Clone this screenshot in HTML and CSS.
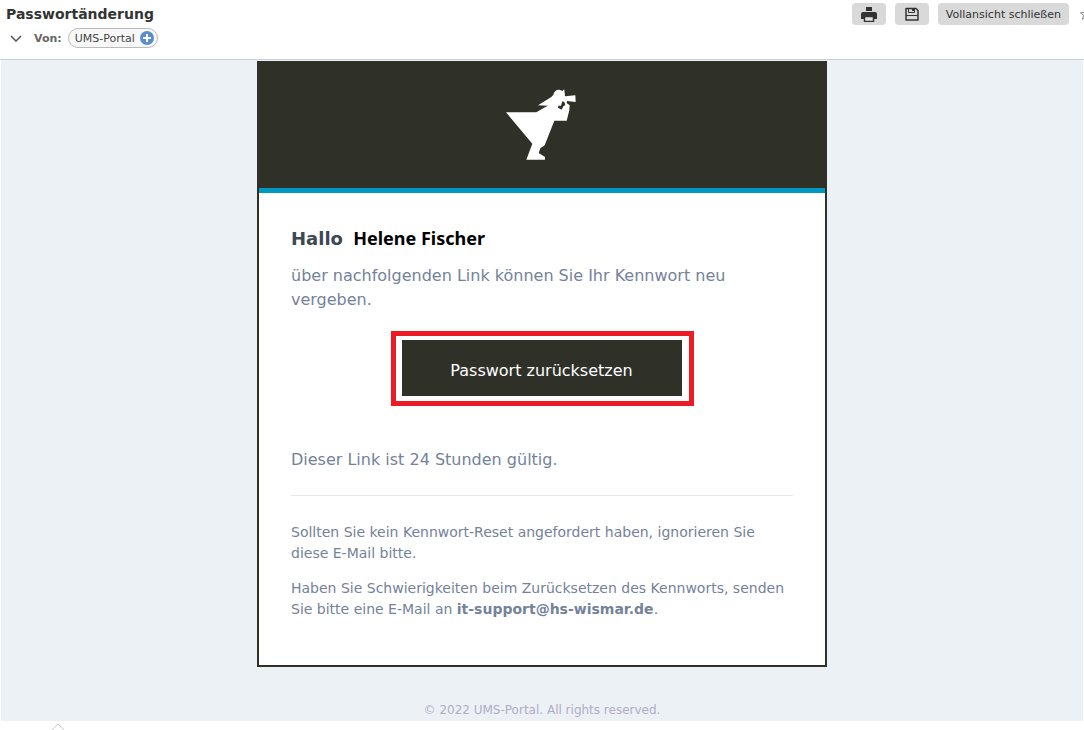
FILE: index.html
```
<!DOCTYPE html>
<html lang="de">
<head>
    <meta charset="UTF-8">
    <meta name="viewport" content="width=device-width, initial-scale=1.0">
    <title>Passwortänderung</title>
    <link rel="stylesheet" href="styles.css">
</head>
<body>
    <header class="mail-header">
        <div class="mail-info">
            <h1 class="subject">Passwortänderung</h1>
            <div class="sender">
                <button class="toggle" aria-label="Details anzeigen">
                    <svg width="12" height="7" viewBox="0 0 12 7" fill="none" stroke="#555" stroke-width="1.5"><path d="M1 1l5 5 5-5"/></svg>
                </button>
                <span class="from">Von:</span>
                <button class="contact">
                    UMS-Portal
                    <svg width="14" height="14" viewBox="0 0 14 14"><circle cx="7" cy="7" r="7" fill="#5b8cd0"/><path d="M7 3v8M3 7h8" stroke="#fff" stroke-width="2"/></svg>
                </button>
            </div>
        </div>
        <div class="actions">
            <button class="action icon" aria-label="Drucken">
                <svg width="16" height="16" viewBox="0 0 16 16"><path fill="#333" d="M5 1h6v4H5zM2 6h12q2 0 2 2v5H0V8q0-2 2-2z"/><path fill="#e4e4e4" stroke="#333" stroke-width="1.500" d="M3.500 10.500h9v5h-9z"/></svg>
            </button>
            <button class="action icon" aria-label="Speichern">
                <svg width="16" height="16" viewBox="0 0 16 16"><path fill="none" stroke="#333" stroke-width="1.500" stroke-linejoin="round" d="M2 2.500h10l2 2v9.500H2z"/><path fill="none" stroke="#333" d="M4.500 3v3.500h6V3M2 9.500h12"/><path fill="#333" d="M8 3h2v2H8z"/></svg>
            </button>
            <button class="action">Vollansicht schließen</button>
            <button class="star" aria-label="Markieren">
                <svg width="12" height="12" viewBox="0 0 12 12" fill="none" stroke="#888"><path d="M6 1l1.500 3.500 4 .3-3 2.500 1 4L6 9l-3.500 2.300 1-4-3-2.500 4-.3z"/></svg>
            </button>
        </div>
    </header>

    <main class="mail-body">
        <article class="card">
            <div class="card-header">
                <svg class="logo" viewBox="48 42 216 216" role="img" aria-label="Hochschule Wismar">
                    <path fill="#fff" d="M48 112H139L165 97 174 92 144 91 184 66 190 59C192 49 200 43 208 44L218 48 220 44H223L225 64 256 61 257 81 231 78 230 84 239 91 238 106 230 137H193L164 211 151 220 146 234 165 246V254H109L127 206Z"/>
                    <path fill="#2f3129" d="M217 79L223 81 226 90 220 94 215 104 204 98 205 92 213 92Z"/>
                </svg>
            </div>
            <div class="content">
                <h2 class="greeting">Hallo <span class="name">Helene Fischer</span></h2>
                <p>über nachfolgenden Link können Sie Ihr Kennwort neu vergeben.</p>
                <div class="highlight">
                    <a class="reset" href="#">Passwort zurücksetzen</a>
                </div>
                <p>Dieser Link ist 24 Stunden gültig.</p>
                <hr class="divider">
                <p class="note">Sollten Sie kein Kennwort-Reset angefordert haben, ignorieren Sie diese E-Mail bitte.</p>
                <p class="note">Haben Sie Schwierigkeiten beim Zurücksetzen des Kennworts, senden Sie bitte eine E-Mail an <a class="support" href="mailto:it-support@hs-wismar.de">it-support@hs-wismar.de</a>.</p>
            </div>
        </article>
        <footer class="footer">© 2022 UMS-Portal. All rights reserved.</footer>
    </main>

    <div class="collapse">
        <svg width="16" height="9" viewBox="0 0 16 9" fill="none" stroke="#ccc"><path d="M1 8l7-7 7 7"/></svg>
    </div>
</body>
</html>
```
FILE: styles.css
```
* {
    box-sizing: border-box;
}
body {
    margin: 0;
    background: #fff;
    font-family: Verdana, "DejaVu Sans", sans-serif;
    overflow: hidden;
}
button {
    font-family: inherit;
    border: none;
    background: none;
    padding: 0;
    cursor: pointer;
}
svg {
    display: block;
}
.mail-header {
    display: flex;
    justify-content: space-between;
    height: 60px;
    padding: 3px 0 0 6px;
    border-bottom: 1px solid #c3cfd9;
}
.subject {
    margin: 0;
    font-size: 14px;
    line-height: 22px;
    color: #333;
}
.sender {
    display: flex;
    align-items: center;
    gap: 12px;
    padding-left: 4px;
    margin-top: 3px;
}
.from {
    font-size: 11px;
    font-weight: bold;
    color: #666;
}
.contact {
    display: flex;
    align-items: center;
    gap: 5px;
    height: 20px;
    margin-left: -6px;
    padding: 0 3px 0 6px;
    border: 1px solid #bbb;
    border-radius: 10px;
    background: #f8f8f8;
    font-size: 11px;
    color: #444;
}
.actions {
    display: flex;
    flex-shrink: 0;
    gap: 9px;
    height: 22px;
    margin-right: -8px;
}
.action {
    display: flex;
    align-items: center;
    justify-content: center;
    padding: 0 8px;
    border-radius: 4px;
    background: #d9d9d9;
    font-size: 11px;
    color: #333;
}
.action.icon {
    width: 34px;
    padding: 0;
}
.star {
    margin-left: 2px;
}
.mail-body {
    margin: 0 1px;
    padding: 1px 0 0;
    background: #ecf1f5;
}
.card {
    max-width: 570px;
    margin: 0 auto;
    border: 2px solid #2f3129;
    background: #fff;
}
.card-header {
    padding: 26px 0 27px;
    border-bottom: 5px solid #0098c0;
    background: #2f3129;
}
.logo {
    width: 72px;
    height: 72px;
    margin: 0 auto;
}
.content {
    padding: 31px 32px 45px;
    color: #74829a;
}
.content p {
    margin: 0;
    font-size: 16px;
    line-height: 24px;
}
.greeting {
    margin: 0 0 11px;
    font-size: 18px;
    line-height: 28px;
    color: #3d4852;
}
.name {
    margin-left: 4px;
    font-family: "Noto Sans", sans-serif;
    color: #000;
}
.highlight {
    width: fit-content;
    margin: 19px auto 42px;
    padding: 4px 7px 5px 6px;
    border: 5px solid #ed1c24;
}
.reset {
    display: block;
    width: 280px;
    padding: 19px 0 13px;
    background: #2f3129;
    font-size: 16px;
    line-height: 24px;
    text-align: center;
    text-decoration: none;
    color: #fff;
}
.divider {
    margin: 23px 0 26px;
    border: none;
    border-top: 1px solid #e8e5ef;
}
.content .note {
    margin-bottom: 14px;
    font-size: 14px;
    line-height: 21px;
}
.content .note:last-child {
    margin-bottom: 0;
}
.support {
    font-weight: bold;
    text-decoration: none;
    color: inherit;
}
.footer {
    padding: 33px 0 1px;
    font-size: 12px;
    line-height: 20px;
    text-align: center;
    color: #b0adc5;
}
.collapse {
    padding: 2px 0 0 50px;
}
```
